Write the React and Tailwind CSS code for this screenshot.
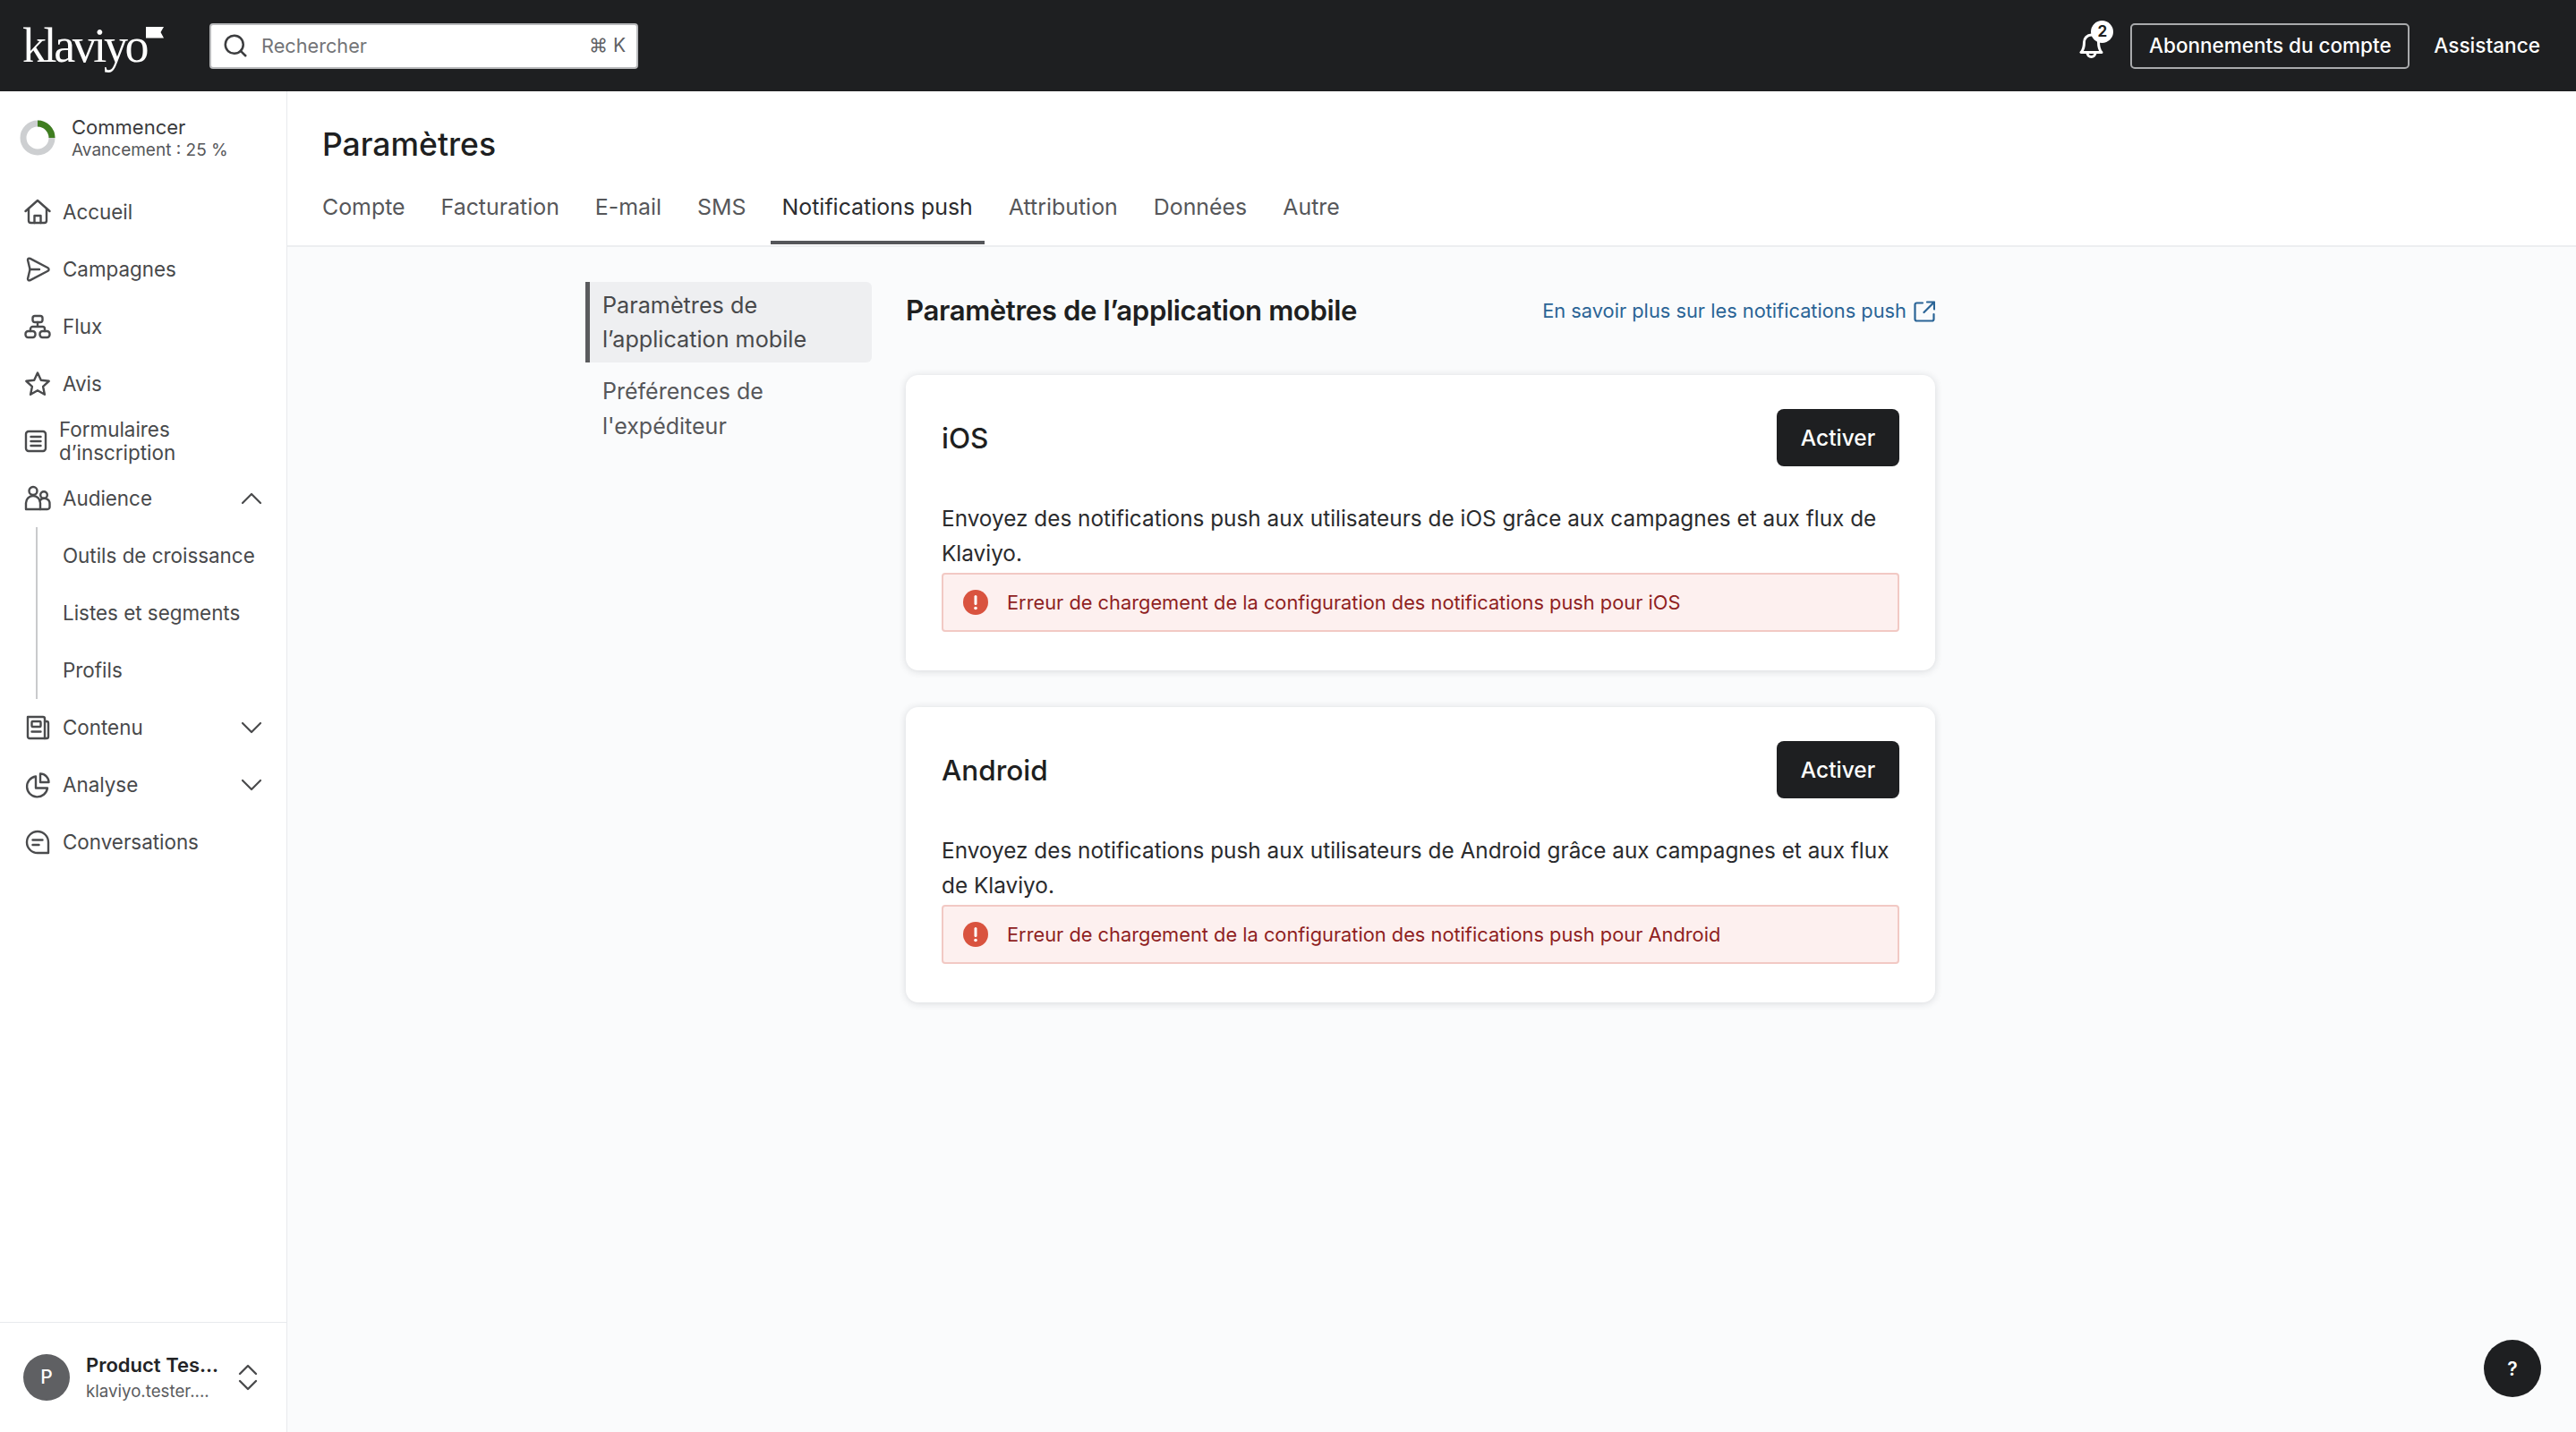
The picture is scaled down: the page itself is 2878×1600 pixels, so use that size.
import React from 'react';
import { Search } from 'lucide-react';

const Icon = ({ children }) => (
  <svg width="30" height="30" viewBox="0 0 30 30" fill="none" stroke="#4a4b4d" strokeWidth="2.4" strokeLinecap="round" strokeLinejoin="round" className="shrink-0">
    {children}
  </svg>
);

const HomeIcon = () => (
  <Icon>
    <path d="M1.5 14 15 2l13.5 12" />
    <path d="M5 11v13.5a2.5 2.5 0 0 0 2.5 2.5h15a2.5 2.5 0 0 0 2.5-2.5V11" />
    <path d="M11.5 27v-8h7v8" />
  </Icon>
);
const SendIcon = () => (
  <Icon>
    <path d="M4 4.5c0-1.600 1.300-2.300 2.700-1.600L26.500 13.200c1.400.8 1.400 2.800 0 3.600L6.700 27.100C5.300 27.800 4 27 4 25.500l2.500-10.500z" />
    <path d="M6.500 15H17" />
  </Icon>
);
const FlowIcon = () => (
  <Icon>
    <rect x="9.500" y="3" width="11" height="7" rx="2.500" />
    <rect x="1.500" y="20" width="11" height="7" rx="3" />
    <rect x="17.500" y="20" width="11" height="7" rx="3" />
    <path d="M15 10v5M7 20v-2.500a2.500 2.500 0 0 1 2.500-2.500h11a2.500 2.500 0 0 1 2.500 2.500V20" />
  </Icon>
);
const StarIcon = () => (
  <Icon>
    <path d="M15 2.500l3.800 8.200 8.900 1.100-6.600 6.100 1.800 8.900-7.900-4.500-7.900 4.500 1.800-8.900-6.600-6.100 8.900-1.100z" />
  </Icon>
);
const FormIcon = () => (
  <Icon>
    <rect x="4" y="4" width="22" height="22" rx="3" />
    <path d="M9.500 10h11M9.500 15h11M9.500 20h11" />
  </Icon>
);
const AudienceIcon = () => (
  <Icon>
    <circle cx="10" cy="6.500" r="4.500" />
    <circle cx="22" cy="11" r="3.800" />
    <path d="M2 27v-7a8 8 0 0 1 16 0v7z" />
    <path d="M18 27h8a2.500 2.500 0 0 0 2.500-2.500V21a6 6 0 0 0-11-3.500" />
  </Icon>
);
const ContentIcon = () => (
  <Icon>
    <path d="M4 3h17a2 2 0 0 1 2 2v22H6a2 2 0 0 1-2-2z" />
    <rect x="8.500" y="8" width="10" height="6" rx="1" />
    <path d="M8.500 19.500h10M23 8h2a2 2 0 0 1 2 2v15a2 2 0 0 1-2 2h-2" />
  </Icon>
);
const PieIcon = () => (
  <Icon>
    <path d="M13 5.500a11.500 11.500 0 1 0 13 13H13z" />
    <path d="M18 2.500a9.500 9.500 0 0 1 9.500 9.500H18z" />
  </Icon>
);
const ChatIcon = () => (
  <Icon>
    <path d="M15 3a12 12 0 1 0 0 24h12v-12A12 12 0 0 0 15 3z" />
    <path d="M9.500 12.500h11M9.500 18h7" />
  </Icon>
);
const Chevron = ({ up }) => (
  <svg width="24" height="14" viewBox="0 0 24 14" fill="none" stroke="#4a4b4d" strokeWidth="2.200" strokeLinecap="round" strokeLinejoin="round" className="shrink-0">
    <path d={up ? 'M2 12 12 2l10 10' : 'M2 2l10 10L22 2'} />
  </svg>
);

const NavRow = ({ icon, label, chevron }) => (
  <div className="flex h-[64px] items-center pl-[27px] pr-[27px]">
    {icon}
    <span className="ml-[13px] flex-1 text-[22.4px] text-[#48494b]">{label}</span>
    {chevron && <Chevron up={chevron === 'up'} />}
  </div>
);

const Sidebar = () => (
  <aside className="flex w-[321px] shrink-0 flex-col border-r border-[#e8eaed] bg-white">
    <div className="flex items-center pl-[22px] pt-[26px]">
      <svg width="40" height="40" viewBox="0 0 40 40" fill="none" strokeWidth="7" className="shrink-0">
        <circle cx="20" cy="20" r="16" stroke="#cdcfd1" />
        <path d="M20 4a16 16 0 0 1 16 16" stroke="#3f7d20" />
      </svg>
      <div className="ml-[18px]">
        <div className="text-[22px] leading-[28px] text-[#3a3b3d]">Commencer</div>
        <div className="text-[19px] leading-[24px] text-[#56575a]">Avancement : 25 %</div>
      </div>
    </div>
    <nav className="mt-[25px]">
      <NavRow icon={<HomeIcon />} label="Accueil" />
      <NavRow icon={<SendIcon />} label="Campagnes" />
      <NavRow icon={<FlowIcon />} label="Flux" />
      <NavRow icon={<StarIcon />} label="Avis" />
      <div className="flex h-[64px] items-center pl-[25px]">
        <FormIcon />
        <span className="ml-[11px] text-[22.4px] leading-[26px] text-[#48494b]">Formulaires<br />d’inscription</span>
      </div>
      <NavRow icon={<AudienceIcon />} label="Audience" chevron="up" />
      <div className="ml-[40px] border-l-2 border-[#c9cacc] pl-[28px]">
        <div className="flex h-[64px] items-center text-[22.4px] text-[#48494b]">Outils de croissance</div>
        <div className="flex h-[64px] items-center text-[22.4px] text-[#48494b]">Listes et segments</div>
        <div className="flex h-[64px] items-center text-[22.4px] text-[#48494b]">Profils</div>
      </div>
      <NavRow icon={<ContentIcon />} label="Contenu" chevron="down" />
      <NavRow icon={<PieIcon />} label="Analyse" chevron="down" />
      <NavRow icon={<ChatIcon />} label="Conversations" />
    </nav>
    <div className="mt-auto flex h-[123px] items-center border-t border-[#e8eaed] pl-[26px]">
      <div className="flex h-[52px] w-[52px] shrink-0 items-center justify-center rounded-full bg-[#5f6063] text-[21px] font-medium text-white">P</div>
      <div className="ml-[18px] flex-1">
        <div className="text-[22px] font-semibold leading-[30px] text-[#232426]">Product Tes...</div>
        <div className="text-[18.7px] leading-[29px] text-[#5a5b5e]">klaviyo.tester....</div>
      </div>
      <svg width="22" height="30" viewBox="0 0 22 30" fill="none" stroke="#4a4b4d" strokeWidth="2.400" strokeLinecap="round" strokeLinejoin="round" className="mr-[32px] shrink-0">
        <path d="M2 11 11 2l9 9M2 19l9 9 9-9" />
      </svg>
    </div>
  </aside>
);

const Header = () => (
  <header className="flex h-[102px] shrink-0 items-center bg-[#1e1f21]">
    <div className="relative ml-[25px] w-[184px] select-none font-['Liberation_Serif',serif] text-[54px] leading-none tracking-[-3.4px] text-white">
      klaviyo
      <svg width="20" height="13" viewBox="0 0 20 13" className="absolute left-[138px] top-[6px]">
        <path d="M0 0h20l-3.500 6 3.500 6.500H0z" fill="#fff" />
      </svg>
    </div>
    <div className="ml-[25px] flex h-[51px] w-[479px] items-center rounded-[4px] border-2 border-[#b9babc] bg-white pl-[12px] pr-[12px]">
      <Search size={30} strokeWidth={2} color="#3c3d3f" />
      <span className="ml-[14px] flex-1 text-[21.7px] text-[#737477]">Rechercher</span>
      <span className="text-[21px] text-[#606164]">⌘ K</span>
    </div>
    <div className="ml-auto flex items-center">
      <div className="relative mr-[32px] h-[30px] w-[25px]">
        <svg width="27" height="30" viewBox="0 0 27 30" fill="none" stroke="#fff" strokeWidth="3" strokeLinecap="round" strokeLinejoin="round">
          <path d="M13.500 3a8 8 0 0 0-8 8c0 6-1 9-3.500 11.500h23c-2.500-2.500-3.500-5.500-3.500-11.500a8 8 0 0 0-8-8z" />
          <path d="M9 23a4.500 4.500 0 0 0 9 0" />
        </svg>
        <div className="absolute left-[13px] top-[-13px] flex h-[25px] w-[25px] items-center justify-center rounded-full bg-white text-[17px] font-bold text-[#1e1f21]">2</div>
      </div>
      <div className="flex h-[51px] w-[312px] items-center justify-center rounded-[5px] border-2 border-[#a9aaac] text-[22.5px] font-medium text-white">Abonnements du compte</div>
      <span className="ml-[27px] mr-[40px] text-[22.6px] font-medium text-white">Assistance</span>
    </div>
  </header>
);

const tabs = ['Compte', 'Facturation', 'E-mail', 'SMS', 'Notifications push', 'Attribution', 'Données', 'Autre'];

const PlatformCard = ({ name, text, error }) => (
  <section className="rounded-[14px] bg-white px-[40px] pb-[43px] pt-[38px] shadow-[0_1px_8px_rgba(30,35,50,0.16)]">
    <div className="flex items-center justify-between">
      <h3 className="pt-[2px] text-[31.5px] font-medium leading-[62px] text-[#1e1f21]">{name}</h3>
      <button className="flex h-[64px] w-[137px] items-center justify-center rounded-[8px] bg-[#1e1f21] text-[24.5px] font-medium text-white">Activer</button>
    </div>
    <p className="mt-[39px] text-[24.35px] leading-[39px] text-[#2a2b2d]">{text}</p>
    <div className="mt-[2px] flex h-[66px] items-center rounded-[4px] border-2 border-[#f2c9c4] bg-[#fdf0ef] pl-[22px]">
      <svg width="28" height="28" viewBox="0 0 28 28" className="shrink-0">
        <circle cx="14" cy="14" r="14" fill="#d9533f" />
        <rect x="12.500" y="6" width="3" height="11" rx="1.500" fill="#fff" />
        <circle cx="14" cy="20.500" r="1.800" fill="#fff" />
      </svg>
      <span className="ml-[21px] text-[21.8px] text-[#8f1f1f]">{error}</span>
    </div>
  </section>
);

export default function App() {
  return (
    <div className="relative flex h-[1600px] w-full flex-col overflow-hidden bg-white font-['Inter',sans-serif]">
      <Header />
      <div className="flex min-h-0 flex-1">
        <Sidebar />
        <main className="flex min-w-0 flex-1 flex-col bg-[#fafbfc]">
          <div className="h-[174px] shrink-0 border-b-2 border-[#eceef0] bg-white pl-[39px]">
            <h1 className="pt-[37px] text-[35.5px] font-medium leading-[46px] text-[#1e1f21]">Paramètres</h1>
            <div className="mt-[28px] flex gap-[40px]">
              {tabs.map((tab) => (
                <div key={tab} className="relative text-[24.9px] leading-[36px] text-[#56575a]">
                  {tab === 'Notifications push' ? <span className="text-[#2c2d2f]">{tab}</span> : tab}
                  {tab === 'Notifications push' && <div className="absolute -left-[13px] -right-[13px] top-[56px] h-[4px] bg-[#55565a]" />}
                </div>
              ))}
            </div>
          </div>
          <div className="flex pl-[333px] pt-[39px]">
            <div className="w-[320px] shrink-0">
              <div className="h-[90px] rounded-r-[6px] border-l-[5px] border-[#5a5b5e] bg-[#eeeff1] pl-[14px] pt-[7px] text-[25.2px] leading-[38px] text-[#48494b]">
                Paramètres de<br />l’application mobile
              </div>
              <div className="mt-[13px] pl-[19px] text-[25px] leading-[39px] text-[#56575a]">
                Préférences de<br />l'expéditeur
              </div>
            </div>
            <div className="ml-[38px] w-[1150px] shrink-0">
              <div className="flex h-[65px] items-center justify-between">
                <h2 className="text-[31.2px] font-semibold tracking-[-0.4px] text-[#1e1f21]">Paramètres de l’application mobile</h2>
                <a className="flex items-center gap-[8px] text-[21.8px] text-[#2a6496]">
                  En savoir plus sur les notifications push
                  <svg width="24" height="24" viewBox="0 0 24 24" fill="none" stroke="currentColor" strokeWidth="2.200" strokeLinecap="round" strokeLinejoin="round" className="shrink-0">
                    <path d="M10 2.500H3.500a2 2 0 0 0-2 2v16a2 2 0 0 0 2 2h17a2 2 0 0 0 2-2V15" />
                    <path d="M15 1.500h8v8M23 1.500 11.500 13" />
                  </svg>
                </a>
              </div>
              <div className="mt-[39px] flex flex-col gap-[41px]">
                <PlatformCard
                  name="iOS"
                  text="Envoyez des notifications push aux utilisateurs de iOS grâce aux campagnes et aux flux de Klaviyo."
                  error="Erreur de chargement de la configuration des notifications push pour iOS"
                />
                <PlatformCard
                  name="Android"
                  text="Envoyez des notifications push aux utilisateurs de Android grâce aux campagnes et aux flux de Klaviyo."
                  error="Erreur de chargement de la configuration des notifications push pour Android"
                />
              </div>
            </div>
          </div>
        </main>
      </div>
      <div className="absolute left-[2775px] top-[1497px] flex h-[64px] w-[64px] items-center justify-center rounded-full bg-[#1e1f21] pt-[2px] text-[21px] font-semibold text-white">?</div>
    </div>
  );
}
